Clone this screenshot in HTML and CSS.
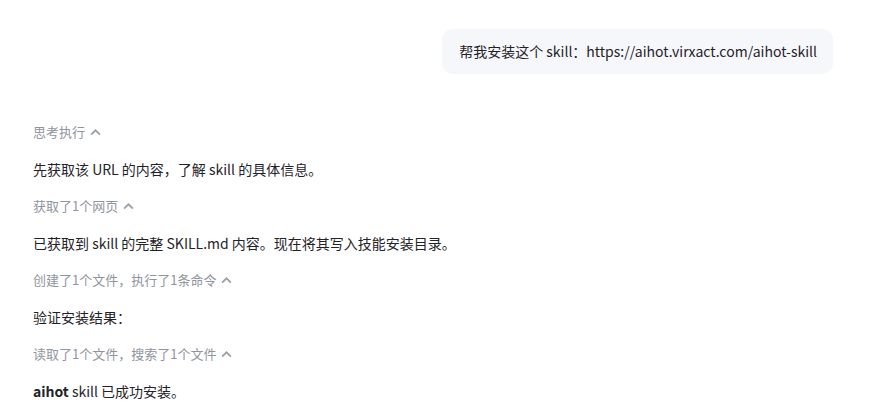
FILE: index.html
```html
<!DOCTYPE html>
<html lang="zh-CN">
<head>
    <meta charset="UTF-8">
    <meta name="viewport" content="width=device-width, initial-scale=1.0">
    <title>安装 skill</title>
    <link rel="stylesheet" href="styles.css">
</head>
<body>
    <div class="chat">
        <div class="user-row">
            <div class="bubble">帮我安装这个 skill：https://aihot.virxact.com/aihot-skill</div>
        </div>
        <div class="reply">
            <div class="step">思考执行 <svg class="chev" viewBox="0 0 10 6"><path d="M1 5 L5 1 L9 5"/></svg></div>
            <div class="text">先获取该 URL 的内容，了解 skill 的具体信息。</div>
            <div class="step">获取了1个网页 <svg class="chev" viewBox="0 0 10 6"><path d="M1 5 L5 1 L9 5"/></svg></div>
            <div class="text">已获取到 skill 的完整 SKILL.md 内容。现在将其写入技能安装目录。</div>
            <div class="step">创建了1个文件，执行了1条命令 <svg class="chev" viewBox="0 0 10 6"><path d="M1 5 L5 1 L9 5"/></svg></div>
            <div class="text">验证安装结果：</div>
            <div class="step">读取了1个文件，搜索了1个文件 <svg class="chev" viewBox="0 0 10 6"><path d="M1 5 L5 1 L9 5"/></svg></div>
            <div class="text"><b>aihot</b> skill 已成功安装。</div>
        </div>
    </div>
</body>
</html>
```

FILE: styles.css
```css
body {
    margin: 0;
    background: #fff;
    font-family: "Noto Sans CJK SC", "Noto Sans", sans-serif;
    color: #1f2329;
}
.chat {
    padding: 29px 37px 0 33px;
}
.user-row {
    display: flex;
    justify-content: flex-end;
}
.bubble {
    background: #f6f7fb;
    border-radius: 11px;
    padding: 11px 16px 12px 17px;
    font-size: 14px;
    line-height: 22px;
}
.reply {
    margin-top: 47px;
    display: flex;
    flex-direction: column;
    gap: 15px;
}
.step {
    font-size: 13px;
    line-height: 22px;
    color: #8f959e;
    display: flex;
    align-items: center;
}
.chev {
    width: 11px;
    height: 7px;
    margin-left: 5px;
    fill: none;
    stroke: #9aa0a8;
    stroke-width: 1.6;
}
.text {
    font-size: 14px;
    line-height: 22px;
}
.text b {
    font-weight: 700;
}
```
